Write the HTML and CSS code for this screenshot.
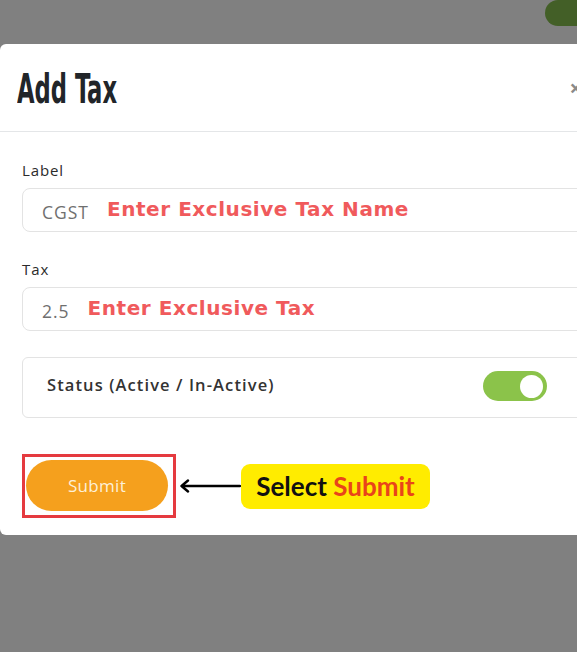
FILE: index.html
```html
<!DOCTYPE html>
<html>
<head>
<meta charset="utf-8">
<title>Add Tax</title>
<link rel="stylesheet" href="styles.css">
</head>
<body>
<div class="page">
  <div class="topbar"><span class="pill"></span></div>
  <div class="modal">
    <div class="modal-header">
      <h1 class="title">Add Tax</h1>
      <span class="close">×</span>
    </div>
    <div class="modal-body">
      <div class="field">
        <div class="label">Label</div>
        <div class="input">
          <span class="value">CGST</span>
          <span class="note">Enter Exclusive Tax Name</span>
        </div>
      </div>
      <div class="field">
        <div class="label">Tax</div>
        <div class="input">
          <span class="value">2.5</span>
          <span class="note">Enter Exclusive Tax</span>
        </div>
      </div>
      <div class="status">
        <span class="status-text">Status (Active / In-Active)</span>
        <span class="toggle"><span class="knob"></span></span>
      </div>
      <div class="actions">
        <div class="highlight">
          <button class="submit">Submit</button>
        </div>
        <svg class="arrow" width="62" height="14" viewBox="0 0 62 14">
          <path d="M61 7H3M9 1.5L2.5 7L9 12.5" fill="none" stroke="#000" stroke-width="2.4" stroke-linecap="round" stroke-linejoin="round"/>
        </svg>
        <div class="callout">Select <span class="callout-red">Submit</span></div>
      </div>
    </div>
  </div>
</div>
</body>
</html>
```

FILE: styles.css
```css
* { box-sizing: border-box; }
html, body {
  margin: 0;
  padding: 0;
  background: #808080;
  overflow: hidden;
}
.page {
  width: 577px;
  height: 652px;
  overflow: hidden;
  position: relative;
}
.topbar {
  height: 44px;
  display: flex;
  justify-content: flex-end;
}
.pill {
  display: block;
  width: 50px;
  height: 26px;
  margin-right: -18px;
  background: #435f27;
  border-radius: 0 0 0 13px;
  border-top-left-radius: 13px;
}
.modal {
  width: 620px;
  background: #fff;
  border-radius: 6px;
  font-family: "Open Sans", "Noto Sans", sans-serif;
}
.modal-header {
  height: 88px;
  border-bottom: 1px solid #e4e6e8;
  display: flex;
  align-items: center;
  justify-content: space-between;
  padding: 0 38px 0 17px;
}
.title {
  margin: 0;
  font-family: "Liberation Sans Narrow", "DejaVu Sans Condensed", sans-serif;
  font-weight: 700;
  font-size: 40px;
  color: #212529;
  transform: scaleX(0.63);
  transform-origin: left center;
  padding-top: 2px;
  white-space: nowrap;
}
.close {
  font-size: 22px;
  color: #8a8a8a;
  font-weight: 700;
  margin-top: -2px;
}
.modal-body {
  padding: 28px 30px 17px 22px;
}
.field {
  margin-bottom: 27px;
}
.label {
  font-size: 15px;
  font-weight: 500;
  letter-spacing: 0.9px;
  color: #2b2b2b;
  line-height: 20px;
  margin-bottom: 8px;
}
.input {
  height: 44px;
  border: 1px solid #e3e3e3;
  border-radius: 8px;
  display: flex;
  align-items: center;
  padding-left: 19px;
}
.value {
  font-size: 17.5px;
  letter-spacing: 1px;
  color: #6f6f6f;
  margin-top: 3px;
}
.note {
  font-family: "DejaVu Sans", sans-serif;
  font-weight: 700;
  font-size: 20px;
  letter-spacing: 0.55px;
  color: #f05a5c;
  margin-left: 18px;
  margin-top: -3px;
}
.status {
  height: 61px;
  border: 1px solid #e3e3e3;
  border-radius: 6px;
  display: flex;
  align-items: center;
  justify-content: space-between;
  padding: 0 42px 0 24px;
  margin-top: -1px;
}
.status-text {
  font-size: 16.5px;
  font-weight: 600;
  letter-spacing: 1.1px;
  color: #333;
  margin-top: -6px;
}
.toggle {
  width: 64px;
  height: 30px;
  border-radius: 15px;
  background: #8bc34a;
  display: flex;
  align-items: center;
  justify-content: flex-end;
  padding-right: 4px;
  margin-top: -3px;
}
.knob {
  width: 23px;
  height: 23px;
  border-radius: 50%;
  background: #fff;
}
.actions {
  display: flex;
  align-items: center;
  margin-top: 36px;
}
.highlight {
  width: 154px;
  height: 64px;
  border: 3px solid #e53a3f;
  padding: 3px 6px 4px 1px;
}
.submit {
  width: 142px;
  height: 51px;
  border: none;
  border-radius: 26px;
  background: #f5a01d;
  color: #fdf0d8;
  font-family: "Open Sans", sans-serif;
  font-weight: 500;
  font-size: 17px;
  letter-spacing: 0.3px;
  padding: 0;
}
.arrow {
  display: block;
  margin-left: 3px;
}
.callout {
  width: 189px;
  height: 45px;
  background: #ffec00;
  border-radius: 9px;
  display: flex;
  align-items: center;
  justify-content: center;
  font-family: "Lato", sans-serif;
  font-weight: 700;
  font-size: 26px;
  color: #111;
  white-space: pre;
}
.callout-red { color: #e9441a; }
```
